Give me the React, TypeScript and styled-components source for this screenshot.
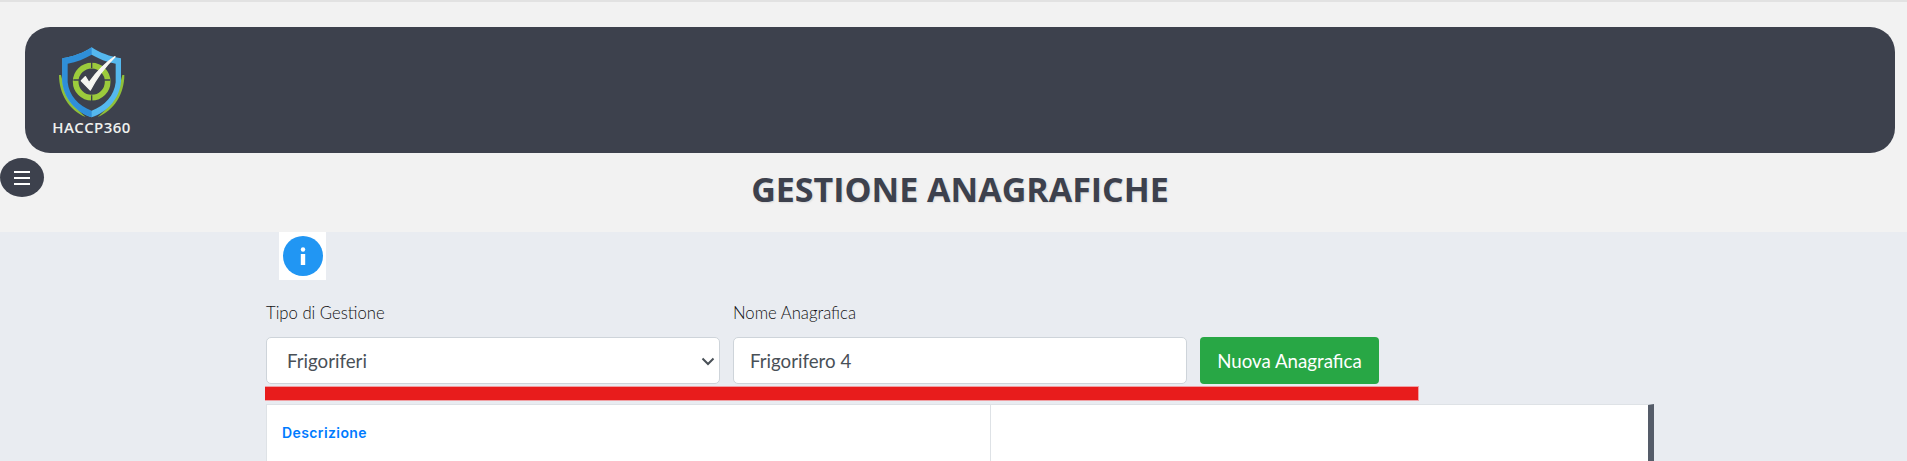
import React from 'react';
import styled, { createGlobalStyle } from 'styled-components';

const GlobalStyle = createGlobalStyle`
  html, body {
    margin: 0;
    height: 100%;
    overflow: hidden;
    background: #e9ecf1;
    font-family: "Open Sans", "Liberation Sans", sans-serif;
  }
`;

const TopBand = styled.div`
  position: relative;
  height: 232px;
  box-sizing: border-box;
  border-top: 2px solid #e2e2e2;
  background: #f2f2f2;
  padding: 25px 12px 0 25px;
`;

const Header = styled.header`
  height: 126px;
  box-sizing: border-box;
  padding: 13px 15px 0;
  border-radius: 25px;
  background: #3d414d;
`;

const Logo = styled.div`
  width: 100px;
  display: flex;
  flex-direction: column;
  align-items: center;
`;

const LogoName = styled.span`
  margin: -1px 0 0 3px;
  color: #eef0ee;
  font-size: 15px;
  line-height: 16px;
  font-weight: 600;
  letter-spacing: 0.4px;
`;

const MenuButton = styled.button`
  position: absolute;
  left: 0;
  top: 156px;
  width: 44px;
  height: 39px;
  padding: 0;
  border: 0;
  border-radius: 50%;
  background: #3d414d;
  display: flex;
  align-items: center;
  justify-content: center;
`;

const Title = styled.h1`
  margin: 0;
  height: 72px;
  display: flex;
  align-items: center;
  justify-content: center;
  color: #3d414d;
  font-size: 34px;
  font-weight: 700;
  text-shadow: 1px 1px 2px rgba(0, 0, 0, 0.1);
`;

const Main = styled.main`
  position: relative;
  width: 1388px;
  margin-left: 266px;
`;

const InfoTile = styled.div`
  width: 47px;
  height: 48px;
  margin-left: 13px;
  background: #fff;
  display: flex;
  align-items: center;
  justify-content: center;
`;

const Form = styled.div`
  display: grid;
  grid-template-columns: 454px 454px auto;
  column-gap: 13px;
  justify-content: start;
  margin-top: 23px;
`;

const Field = styled.div`
  display: flex;
  flex-direction: column;
`;

const Label = styled.label`
  height: 33px;
  padding-top: 1px;
  font-family: Lato, sans-serif;
  font-size: 16.7px;
  font-weight: 300;
  line-height: 18px;
  color: #111;
`;

const controlBase = `
  height: 47px;
  box-sizing: border-box;
  border: 1px solid #ced4da;
  border-radius: 5px;
  background: #fff;
  color: #495057;
  font-family: Lato, sans-serif;
  font-size: 18.7px;
`;

const Select = styled.div`
  ${controlBase}
  display: flex;
  align-items: center;
  justify-content: space-between;
  padding: 0 3px 0 20px;
`;

const Input = styled.input`
  ${controlBase}
  width: 100%;
  padding: 0 16px;
`;

const AddButton = styled.button`
  align-self: end;
  width: 179px;
  height: 47px;
  padding: 0;
  border: 0;
  border-radius: 4px;
  background: #28a745;
  color: #fff;
  font-family: Lato, sans-serif;
  font-size: 18.7px;
`;

const RedMark = styled.div`
  position: absolute;
  left: -1px;
  top: 154px;
  width: 1154px;
  height: 15px;
  background: #e81c1c;
  border: 1px solid #f0a0a4;
  border-left: 0;
  box-sizing: border-box;
`;

const Table = styled.div`
  margin-top: 20px;
  height: 80px;
  display: grid;
  grid-template-columns: 724px 1fr;
  background: #fff;
  border: 1px solid #dee2e6;
  border-right: 6px solid #555c69;
  border-bottom: 0;
`;

const HeadCell = styled.div<{ $divided?: boolean }>`
  padding: 19px 15px;
  color: #007bff;
  font-family: Inter, sans-serif;
  font-size: 14px;
  font-weight: 600;
  line-height: 18px;
  letter-spacing: 0.4px;
  border-right: ${(p) => (p.$divided ? '1px solid #dee2e6' : '0')};
`;

const ShieldLogo = () => (
  <svg width="100" height="80" viewBox="0 0 300 240" aria-hidden="true">
    <path d="M57 105c0 56 30 106 80 126-32-26-62-68-74-126z" fill="#8fbf3a" />
    <path d="M253 105c0 56-30 106-80 126 32-26 62-68 74-126z" fill="#8fbf3a" />
    <path d="M155 22c-24 16-54 28-88 33v70c4 50 40 90 88 107 48-17 84-57 88-107V55c-34-5-64-17-88-33z" fill="#55b8ee" />
    <path d="M155 22c-24 16-54 28-88 33v70c4 50 40 90 88 107z" fill="#2f8fd8" />
    <path d="M155 44c-20 12-46 22-72 27v56c4 40 32 70 72 85 40-15 68-45 72-85V71c-26-5-52-15-72-27z" fill="#3d414d" />
    <circle cx="155" cy="125" r="48" fill="none" stroke="#9ccb3c" strokeWidth="17" />
    <circle cx="155" cy="125" r="30" fill="#3d414d" />
    <path d="M100 120h110M155 66v18M155 166v18" stroke="#3d414d" strokeWidth="4" />
    <path d="M124 122l27 28c18-36 42-68 74-100-36 24-58 50-78 78l-11-18z" fill="#f6f6f2" stroke="#f6f6f2" strokeWidth="4" strokeLinejoin="round" />
  </svg>
);

const MenuIcon = () => (
  <svg width="16" height="14" viewBox="0 0 16 14" aria-hidden="true">
    <path d="M0 1h16M0 7h16M0 13h16" stroke="#fff" strokeWidth="2" />
  </svg>
);

const InfoIcon = () => (
  <svg width="40" height="40" viewBox="0 0 40 40" aria-hidden="true">
    <circle cx="20" cy="20" r="20" fill="#2196f3" />
    <circle cx="20" cy="13.5" r="2.2" fill="#fff" />
    <rect x="17.8" y="18" width="4.4" height="11" fill="#fff" />
  </svg>
);

const Chevron = () => (
  <svg width="16" height="16" viewBox="0 0 16 16" aria-hidden="true">
    <path d="M2.5 5.5l5.5 5.5 5.5-5.5" fill="none" stroke="#495057" strokeWidth="2" />
  </svg>
);

const App = () => (
  <>
    <GlobalStyle />
    <TopBand>
      <Header>
        <Logo>
          <ShieldLogo />
          <LogoName>HACCP360</LogoName>
        </Logo>
      </Header>
      <MenuButton aria-label="Menu">
        <MenuIcon />
      </MenuButton>
      <Title>GESTIONE ANAGRAFICHE</Title>
    </TopBand>
    <Main>
      <InfoTile>
        <InfoIcon />
      </InfoTile>
      <Form>
        <Field>
          <Label>Tipo di Gestione</Label>
          <Select>
            Frigoriferi
            <Chevron />
          </Select>
        </Field>
        <Field>
          <Label>Nome Anagrafica</Label>
          <Input defaultValue="Frigorifero 4" />
        </Field>
        <AddButton>Nuova Anagrafica</AddButton>
      </Form>
      <RedMark />
      <Table>
        <HeadCell $divided>Descrizione</HeadCell>
        <HeadCell />
      </Table>
    </Main>
  </>
);

export default App;
